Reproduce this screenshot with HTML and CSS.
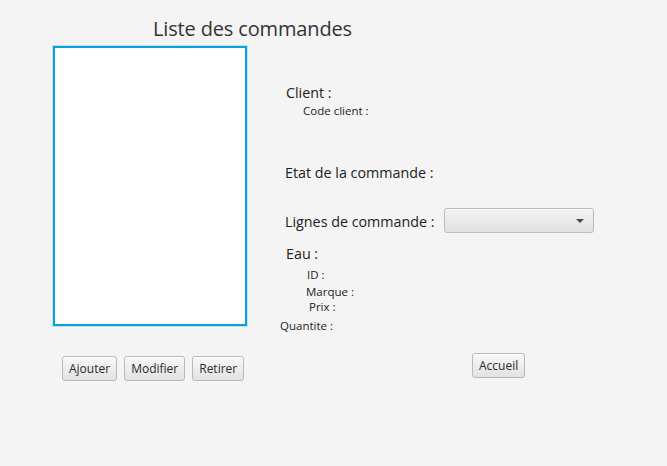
FILE: index.html
```html
<!DOCTYPE html>
<html lang="fr">
<head>
<meta charset="utf-8">
<title>Liste des commandes</title>
<link rel="stylesheet" href="styles.css">
</head>
<body>
<main class="app">
  <h1 class="title">Liste des commandes</h1>
  <div class="content">
    <section class="left">
      <div class="list" tabindex="0"></div>
      <div class="actions">
        <button class="btn">Ajouter</button>
        <button class="btn">Modifier</button>
        <button class="btn">Retirer</button>
      </div>
    </section>
    <section class="details">
      <div class="lbl big client">Client :</div>
      <div class="lbl small code">Code client :</div>
      <div class="lbl big etat">Etat de la commande :</div>
      <div class="lignes">
        <div class="lbl big lignes-label">Lignes de commande :</div>
        <div class="combo"><span class="arrow"></span></div>
      </div>
      <div class="lbl big eau">Eau :</div>
      <div class="lbl small id">ID :</div>
      <div class="lbl small marque">Marque :</div>
      <div class="lbl small prix">Prix :</div>
      <div class="lbl small quantite">Quantite :</div>
      <button class="btn accueil">Accueil</button>
    </section>
  </div>
</main>
</body>
</html>
```

FILE: styles.css
```css
html, body {
  margin: 0;
  padding: 0;
  background: #f4f4f4;
}
body {
  font-family: "Open Sans", "Noto Sans", sans-serif;
  color: #333;
}
.app {
  width: 667px;
  height: 466px;
  padding-top: 16px;
  box-sizing: border-box;
}
.title {
  margin: 0 0 4px 153px;
  font-size: 20px;
  font-weight: 400;
  line-height: 26px;
  height: 26px;
  color: #333;
  letter-spacing: -0.15px;
}
.content {
  display: flex;
}
.left {
  margin-left: 53px;
  width: 194px;
}
.list {
  width: 194px;
  height: 280px;
  box-sizing: border-box;
  background: #fff;
  border: 2px solid #06a2da;
  box-shadow: 0 0 0 1px #c4e3ef;
  outline: none;
}
.actions {
  display: flex;
  gap: 7px;
  margin-top: 30px;
  margin-left: 9px;
}
.btn {
  font-family: "Open Sans", "Noto Sans", sans-serif;
  font-size: 12px;
  color: #2b2b2b;
  height: 25px;
  padding: 0 6px;
  border: 1px solid #b9b9b9;
  border-radius: 3px;
  background: linear-gradient(#f8f8f8, #e2e2e2);
  box-shadow: inset 0 1px 0 #fff;
}
.details {
  margin-left: 33px;
  display: flex;
  flex-direction: column;
  align-items: flex-start;
}
.lbl {
  white-space: nowrap;
  color: #222;
}
.big {
  font-size: 14.3px;
  line-height: 16px;
  height: 16px;
}
.small {
  font-size: 11.5px;
  line-height: 15px;
  height: 15px;
}
.client { margin: 39px 0 0 6px; }
.code { margin: 2px 0 0 23px; }
.etat { margin: 47px 0 0 5px; }
.lignes {
  margin: 27px 0 0 5px;
  display: flex;
  align-items: flex-start;
}
.lignes-label {
  width: 159px;
  margin-top: 6px;
}
.combo {
  width: 150px;
  height: 25px;
  box-sizing: border-box;
  border: 1px solid #bcbcbc;
  border-radius: 3px;
  background: linear-gradient(#f3f3f3, #e1e1e1);
  box-shadow: inset 0 1px 0 #fafafa;
  display: flex;
  align-items: center;
  justify-content: flex-end;
  padding-right: 9px;
}
.arrow {
  width: 0;
  height: 0;
  border-left: 4px solid transparent;
  border-right: 4px solid transparent;
  border-top: 4px solid #4a4a4a;
}
.eau { margin: 13px 0 0 6px; }
.id { margin: 5px 0 0 27px; }
.marque { margin: 2px 0 0 26px; }
.prix { margin: 0 0 0 29px; }
.quantite { margin: 4px 0 0 0; }
.accueil { margin: 20px 0 0 192px; }
```
